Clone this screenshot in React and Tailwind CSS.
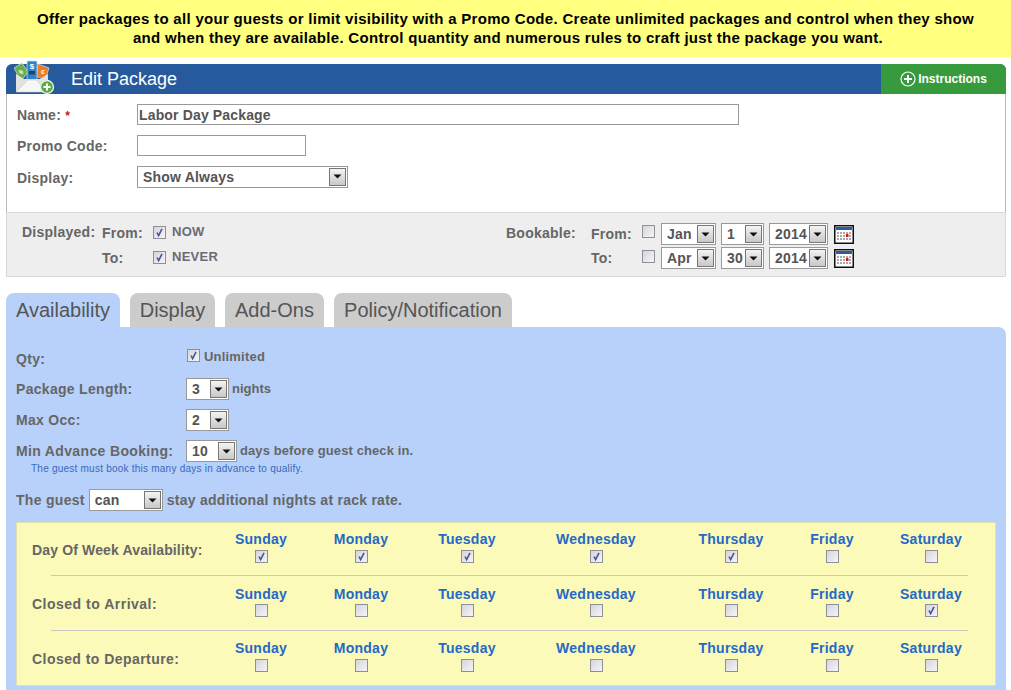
import React from "react";

const Arrow = () => (
  <span className="w-[17px] h-[18px] shrink-0 mr-px border border-[#777] bg-gradient-to-b from-[#f4f4f4] to-[#c8c8c8] flex items-center justify-center">
    <svg width="9" height="5" viewBox="0 0 9 5"><path d="M0.500 0.500h8L4.500 4.500z" fill="#111" /></svg>
  </span>
);

const Select = ({ value, className }) => (
  <span className={`h-[22px] shrink-0 bg-white border border-[#999] flex items-center justify-between text-[14px] font-bold text-[#555] tracking-[0.2px] ${className}`}>
    <span className="pl-[5px] leading-none">{value}</span>
    <Arrow />
  </span>
);

const Check = ({ checked, className = "" }) => (
  <span className={`w-[13px] h-[13px] shrink-0 border border-[#8f8f98] bg-gradient-to-br from-[#d4d4dc] to-[#f6f6f8] flex items-center justify-center ${className}`}>
    {checked && (
      <svg width="9" height="9" viewBox="0 0 9 9"><path d="M2 4.500L3.600 7.600L7 0.800" fill="none" stroke="#4a5599" strokeWidth="1.600" /></svg>
    )}
  </span>
);

const Calendar = () => (
  <svg width="20" height="19" viewBox="0 0 20 19" className="shrink-0 block">
    <rect x="0.750" y="0.750" width="18.500" height="17.500" fill="#fff" stroke="#111" strokeWidth="1.500" />
    <rect x="2" y="2" width="16" height="3" fill="#2d5b9c" />
    <g fill="#aaaaaa">
      {[7, 10, 13].map((y) =>
        [3, 6, 9, 12, 15].map((x) => <rect key={`${x}-${y}`} x={x} y={y} width="2" height="2" />)
      )}
    </g>
    <rect x="12" y="9" width="2.500" height="3" fill="#d01c1c" />
  </svg>
);

const PackageIcon = () => (
  <svg width="42" height="40" viewBox="0 0 42 40" className="absolute left-[8px] top-[-8px]">
    <path d="M0 12L8 7L14 16L7 25z" fill="#69ad4c" stroke="#dfe8d8" strokeWidth="0.700" />
    <path d="M24 8L35 12L31 24L22 20z" fill="#e97c27" stroke="#f0d9c4" strokeWidth="0.700" />
    <rect x="13" y="5" width="10" height="19" fill="#2d83c9" stroke="#d4e4ef" strokeWidth="0.700" />
    <text x="18" y="13" textAnchor="middle" fontSize="8" fontWeight="bold" fill="#fff" fontFamily="Liberation Sans">$</text>
    <rect x="15" y="15" width="6" height="3.500" fill="#26425e" />
    <text x="29" y="18" textAnchor="middle" fontSize="7" fontWeight="bold" fill="#fff" fontFamily="Liberation Sans">c</text>
    <text x="7" y="18" textAnchor="middle" fontSize="5" fontWeight="bold" fill="#fff" fontFamily="Liberation Sans">%</text>
    <path d="M2 18L10 23H26L34 18V36H2z" fill="#dfe2dd" />
    <path d="M2 36L14 24H22L34 36z" fill="#f7f8f5" stroke="#c9ccc6" strokeWidth="0.600" />
    <circle cx="33" cy="31" r="6.500" fill="#5aac44" stroke="#e3efe0" strokeWidth="1.400" />
    <path d="M33 27.500v7M29.500 31h7" stroke="#fff" strokeWidth="2" />
  </svg>
);

const Row = ({ label, className = "", children }) => (
  <div className={`flex items-center ${className}`}>
    <span className="w-[170px] shrink-0">{label}</span>
    {children}
  </div>
);

const days = ["Sunday", "Monday", "Tuesday", "Wednesday", "Thursday", "Friday", "Saturday"];

const DayRow = ({ label, checked, labelPad, headPad, checkGap }) => (
  <>
    <div className={`text-[14px] leading-[16px] font-bold text-[#666] whitespace-nowrap ${labelPad}`}>{label}</div>
    {days.map((d) => (
      <div key={d} className={`flex flex-col items-center ${headPad}`}>
        <span className="text-[14px] leading-[16px] font-bold text-[#2568c8] tracking-[0.25px]">{d}</span>
        <Check checked={checked.includes(d)} className={checkGap} />
      </div>
    ))}
  </>
);

export default function App() {
  return (
    <div className="h-[690px] overflow-hidden bg-white font-['Liberation_Sans',Arial,sans-serif] text-[#666]">
      <div className="h-[57px] bg-[#ffff80] flex items-center justify-center text-center text-[15px] leading-[19px] font-bold text-black tracking-[0.3px] pb-[2px] whitespace-nowrap">
        <div>
          Offer packages to all your guests or limit visibility with a Promo Code. Create unlimited packages and control when they show
          <br />
          <span className="inline-block pl-[5px]">and when they are available. Control quantity and numerous rules to craft just the package you want.</span>
        </div>
      </div>

      <div className="ml-[6px] w-[1000px] mt-[7px]">
        <div className="relative h-[30px] rounded-t-[6px] bg-[#265a9c] flex items-center justify-between">
          <PackageIcon />
          <span className="ml-[65px] text-[18px] text-white">Edit Package</span>
          <span className="h-full w-[125px] bg-[#379a3c] rounded-tr-[6px] flex items-center justify-center gap-[2px] text-[12px] font-bold text-white">
            <svg width="16" height="16" viewBox="0 0 16 16"><circle cx="8" cy="8" r="7" fill="none" stroke="#fff" strokeWidth="1.200" /><path d="M8 4v8M4 8h8" stroke="#fff" strokeWidth="2" /></svg>
            Instructions
          </span>
        </div>

        <div className="h-[118px] bg-white border-x border-[#bbb] pl-[10px] pt-[10px] text-[14px] font-bold tracking-[0.25px]">
          <div className="flex items-center h-[21px]">
            <span className="w-[120px] pt-[2px]">Name: <span className="text-[#c02020] text-[12px]">*</span></span>
            <span className="w-[602px] h-[21px] border border-[#999] flex items-center pl-[1px] pt-[1px] text-[#555] tracking-[0.15px]">Labor Day Package</span>
          </div>
          <div className="flex items-center h-[21px] mt-[10px]">
            <span className="w-[120px] pt-[2px]">Promo Code:</span>
            <span className="w-[169px] h-[21px] border border-[#999]" />
          </div>
          <div className="flex items-center h-[21px] mt-[10px]">
            <span className="w-[120px] pt-[4px]">Display:</span>
            <Select value="Show Always" className="w-[211px]" />
          </div>
        </div>

        <div className="h-[65px] bg-[#eeeeee] border border-[#d8d8d8] flex text-[14px] font-bold tracking-[0.25px] text-[#666]">
          <div className="w-[484px] flex pl-[15px] pt-[9px]">
            <span className="w-[80px]">Displayed:</span>
            <div>
              <div className="flex items-center h-[20px]">
                <span className="w-[51px] pt-[3px]">From:</span>
                <Check checked />
                <span className="ml-[6px] text-[13px] text-[#6b6b75]">NOW</span>
              </div>
              <div className="flex items-center h-[20px] mt-[5px]">
                <span className="w-[51px] pt-[3px]">To:</span>
                <Check checked />
                <span className="ml-[6px] text-[13px] text-[#6b6b75]">NEVER</span>
              </div>
            </div>
          </div>
          <div className="flex pt-[10px] pl-[15px]">
            <span className="w-[85px]">Bookable:</span>
            <div>
              <div className="flex items-center h-[22px]">
                <span className="w-[51px]">From:</span>
                <Check className="mb-[5px]" />
                <Select value="Jan" className="ml-[6px] w-[55px]" />
                <Select value="1" className="ml-[5px] w-[43px]" />
                <Select value="2014" className="ml-[5px] w-[59px]" />
                <span className="ml-[6px]"><Calendar /></span>
              </div>
              <div className="flex items-center h-[22px] mt-[2px]">
                <span className="w-[51px] pt-[1px]">To:</span>
                <Check className="mb-[4px]" />
                <Select value="Apr" className="ml-[6px] w-[55px]" />
                <Select value="30" className="ml-[5px] w-[43px]" />
                <Select value="2014" className="ml-[5px] w-[59px]" />
                <span className="ml-[6px]"><Calendar /></span>
              </div>
            </div>
          </div>
        </div>

        <div className="flex gap-[10px] mt-[16px] h-[34px] text-[20px] text-[#555]">
          <span className="w-[114px] rounded-t-[8px] bg-[#b7d1fb] flex items-center justify-center">Availability</span>
          <span className="w-[85px] rounded-t-[8px] bg-[#cccccc] flex items-center justify-center">Display</span>
          <span className="w-[99px] rounded-t-[8px] bg-[#cccccc] flex items-center justify-center">Add-Ons</span>
          <span className="w-[178px] rounded-t-[8px] bg-[#cccccc] flex items-center justify-center">Policy/Notification</span>
        </div>

        <div className="bg-[#b7d1fb] rounded-tr-[8px] px-[10px] pt-[20px] pb-[10px] text-[14px] font-bold tracking-[0.3px] text-[#666]">
          <Row label={<span className="block pt-[4px]">Qty:</span>} className="h-[20px]">
            <Check checked className="mb-[3px] ml-[1px]" />
            <span className="ml-[4px] text-[13px] tracking-[0.2px]">Unlimited</span>
          </Row>
          <Row label="Package Length:" className="h-[22px] mt-[11px]">
            <Select value="3" className="w-[43px]" />
            <span className="ml-[3px] text-[13px] tracking-[0px]">nights</span>
          </Row>
          <Row label="Max Occ:" className="h-[22px] mt-[9px]">
            <Select value="2" className="w-[43px]" />
          </Row>
          <Row label={<span className="tracking-[0.35px]">Min Advance Booking:</span>} className="h-[22px] mt-[9px]">
            <Select value="10" className="w-[51px]" />
            <span className="ml-[3px] text-[13px] tracking-[0.1px]">days before guest check in.</span>
          </Row>
          <div className="text-[10px] leading-[12px] font-normal tracking-[0.23px] text-[#3a68b8] pl-[15px] mt-[1px]">
            The guest must book this many days in advance to qualify.
          </div>
          <div className="flex items-center h-[22px] mt-[14px]">
            <span>The guest</span>
            <Select value="can" className="ml-[4px] w-[74px]" />
            <span className="ml-[4px] tracking-[0.25px]">stay additional nights at rack rate.</span>
          </div>

          <div className="mt-[11px] h-[164px] bg-[#fbfab8] border border-[#e2e0b0] pl-[15px] pt-[8px] grid grid-cols-[179px_100px_100px_112px_146px_124px_78px_120px] grid-rows-[44px_1px_54px_1px_54px] items-start">
            <DayRow label="Day Of Week Availability:" labelPad="pt-[11px] tracking-[0.15px]" headPad="" checkGap="mt-[3px]" checked={["Sunday", "Monday", "Tuesday", "Wednesday", "Thursday"]} />
            <div className="col-span-full h-px bg-[#c9c9c4] ml-[19px] mr-[23px]" />
            <DayRow label="Closed to Arrival:" labelPad="pt-[20px] tracking-[0.5px]" headPad="pt-[10px]" checkGap="mt-[2px]" checked={["Saturday"]} />
            <div className="col-span-full h-px bg-[#c9c9c4] ml-[19px] mr-[23px]" />
            <DayRow label="Closed to Departure:" labelPad="pt-[20px] tracking-[0.45px]" headPad="pt-[9px]" checkGap="mt-[3px]" checked={[]} />
          </div>
        </div>
      </div>
    </div>
  );
}
